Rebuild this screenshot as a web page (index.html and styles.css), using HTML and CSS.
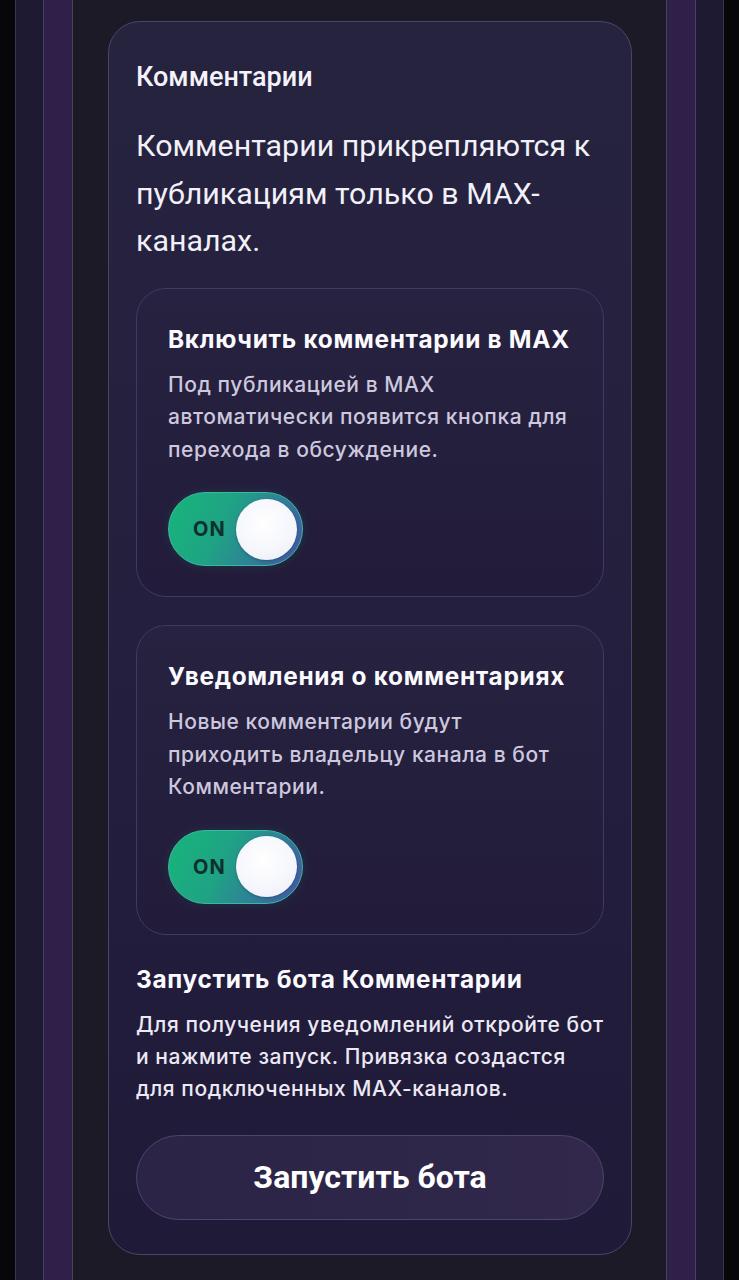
FILE: index.html
```html
<!DOCTYPE html>
<html lang="ru">
<head>
<meta charset="utf-8">
<title>Комментарии</title>
<link rel="stylesheet" href="styles.css">
</head>
<body>
<div class="frame f1">
  <div class="frame f2">
    <div class="frame f3">
      <section class="card">
        <h2 class="card-title">Комментарии</h2>
        <p class="lead">Комментарии прикрепляются к публикациям только в MAX-каналах.</p>

        <div class="option">
          <h3 class="opt-title">Включить комментарии в MAX</h3>
          <p class="opt-desc">Под публикацией в MAX автоматически появится кнопка для перехода в обсуждение.</p>
          <div class="toggle"><span class="toggle-label">ON</span><span class="knob"></span></div>
        </div>

        <div class="option">
          <h3 class="opt-title">Уведомления о комментариях</h3>
          <p class="opt-desc">Новые комментарии будут приходить владельцу канала в бот Комментарии.</p>
          <div class="toggle"><span class="toggle-label">ON</span><span class="knob"></span></div>
        </div>

        <div class="bot">
          <h3 class="opt-title">Запустить бота Комментарии</h3>
          <p class="bot-desc">Для получения уведомлений откройте бот и нажмите запуск. Привязка создастся для подключенных MAX-каналов.</p>
        </div>

        <button class="btn">Запустить бота</button>
      </section>
    </div>
  </div>
</div>
</body>
</html>
```

FILE: styles.css
```css
* { box-sizing: border-box; }
html, body { margin: 0; padding: 0; }
body {
  background: #07070a;
  height: 1280px;
  overflow: hidden;
  font-family: Inter, "Noto Sans", sans-serif;
  color: #fff;
}
.frame { height: 1280px; }
.f1 {
  margin: 0 15px;
  border-left: 1px solid #3b3452;
  border-right: 1px solid #3b3452;
  background: linear-gradient(90deg, #1e1a31, #1a1629 50%, #1e1a31);
  padding: 0 27px;
}
.f2 {
  border-left: 1px solid #4a3f66;
  border-right: 1px solid #4a3f66;
  background: #2e2048;
  padding: 0 28px;
}
.f3 {
  border-left: 1px solid #4a4262;
  border-right: 1px solid #4a4262;
  background: #1c1a26;
  padding: 21px 34px 0 35px;
}
.card {
  border: 1px solid #4a4568;
  border-radius: 32px;
  background: linear-gradient(180deg, #26233f 0%, #231e3d 60%, #1f1a38 100%);
  padding: 40px 27px 34px;
}
.card-title {
  margin: 0;
  font-family: Roboto, sans-serif;
  font-weight: 500;
  font-size: 27px;
  line-height: 30px;
  color: #f4f2fa;
}
.lead {
  margin: 30px 0 23px;
  font-family: Roboto, sans-serif;
  font-weight: 400;
  font-size: 30.4px;
  line-height: 47.5px;
  color: #f2f0f8;
}
.option {
  border: 1px solid #403a5c;
  border-radius: 30px;
  background: linear-gradient(180deg, #26223f, #221c3a);
  padding: 34px 28px 30px 31px;
  margin-bottom: 28px;
}
.opt-title {
  margin: 0;
  font-weight: 700;
  font-size: 24.4px;
  line-height: 32px;
  letter-spacing: 0.7px;
  color: #fbfaff;
}
.opt-desc {
  margin: 14px 0 0;
  font-size: 21px;
  line-height: 32.5px;
  letter-spacing: 0.55px;
  font-weight: 500;
  color: #cdc8de;
}
.toggle {
  margin-top: 26px;
  width: 135px;
  height: 74px;
  border-radius: 37px;
  border: 1px solid #3cb8a0;
  background: linear-gradient(115deg, #17b57a 0%, #1fa384 40%, #2f7f98 70%, #4851a8 100%);
  display: flex;
  align-items: center;
  justify-content: space-between;
  padding: 0 5px 0 24px;
  box-shadow: 0 0 10px rgba(30, 180, 140, 0.15);
}
.toggle-label {
  font-weight: 700;
  font-size: 20px;
  letter-spacing: 1px;
  color: #0f2e30;
}
.knob {
  width: 61px;
  height: 61px;
  border-radius: 50%;
  background: radial-gradient(circle at 45% 40%, #ffffff 0%, #f5f6fc 60%, #e6e8f4 100%);
  box-shadow: 0 1px 3px rgba(0,0,0,0.25);
}
.bot { padding-top: 0; }
.bot-desc {
  margin: 14px -3px 0 0;
  font-size: 21px;
  line-height: 32px;
  letter-spacing: 0.55px;
  font-weight: 500;
  color: #ece9f4;
}
.btn {
  display: block;
  width: 100%;
  margin-top: 30px;
  height: 85px;
  border-radius: 43px;
  border: 1px solid #4d4668;
  background: linear-gradient(90deg, #2c2447, #2e2649 50%, #31284b);
  font-family: Roboto, sans-serif;
  font-weight: 700;
  font-size: 32px;
  color: #fff;
  cursor: pointer;
}
```
